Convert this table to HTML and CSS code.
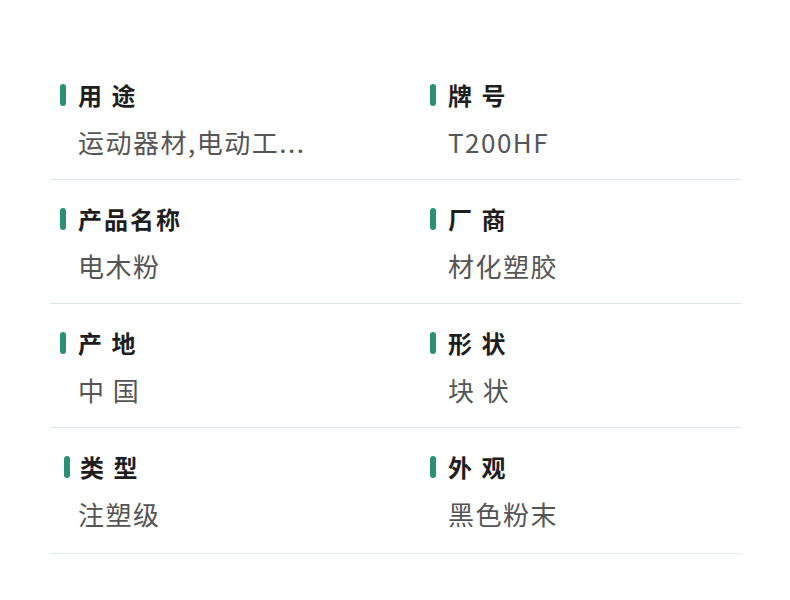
FILE: index.html
```html
<!DOCTYPE html>
<html lang="zh">
<head>
<meta charset="utf-8">
<link rel="stylesheet" href="styles.css">
</head>
<body>
<div class="specs">
  <div class="row">
    <div class="cell"><div class="label">用 途</div><div class="value">运动器材,电动工...</div></div>
    <div class="cell"><div class="label">牌 号</div><div class="value">T200HF</div></div>
  </div>
  <div class="row">
    <div class="cell"><div class="label">产品名称</div><div class="value">电木粉</div></div>
    <div class="cell"><div class="label">厂 商</div><div class="value">材化塑胶</div></div>
  </div>
  <div class="row">
    <div class="cell"><div class="label">产 地</div><div class="value">中 国</div></div>
    <div class="cell"><div class="label">形 状</div><div class="value">块 状</div></div>
  </div>
  <div class="row last">
    <div class="cell"><div class="label shifted">类 型</div><div class="value">注塑级</div></div>
    <div class="cell"><div class="label">外 观</div><div class="value">黑色粉末</div></div>
  </div>
</div>
</body>
</html>
```

FILE: styles.css
```css
html, body {
  margin: 0;
  padding: 0;
  background: #ffffff;
}
body {
  font-family: "Noto Sans CJK SC", "Noto Sans", sans-serif;
}
.specs {
  width: 691px;
  margin: 56px 0 0 50px;
}
.row {
  box-sizing: border-box;
  display: grid;
  grid-template-columns: 370px 1fr;
  height: 124px;
  border-bottom: 1px solid #d8e8e4;
}
.row.last {
  height: 126px;
}
.cell {
  padding: 25px 0 0 10px;
}
.label {
  position: relative;
  padding-left: 18px;
  font-size: 24px;
  line-height: 28px;
  font-weight: 700;
  color: #1e1e1e;
  letter-spacing: 2px;
}
.label::before {
  content: "";
  position: absolute;
  left: 0;
  top: 3px;
  width: 6px;
  height: 22px;
  border-radius: 3px;
  background: #2a9272;
}
.label.shifted {
  margin-left: 4px;
  padding-left: 16px;
}
.value {
  margin-top: 17px;
  padding-left: 18px;
  font-size: 26px;
  line-height: 32px;
  color: #555555;
  letter-spacing: 1.5px;
}
```
